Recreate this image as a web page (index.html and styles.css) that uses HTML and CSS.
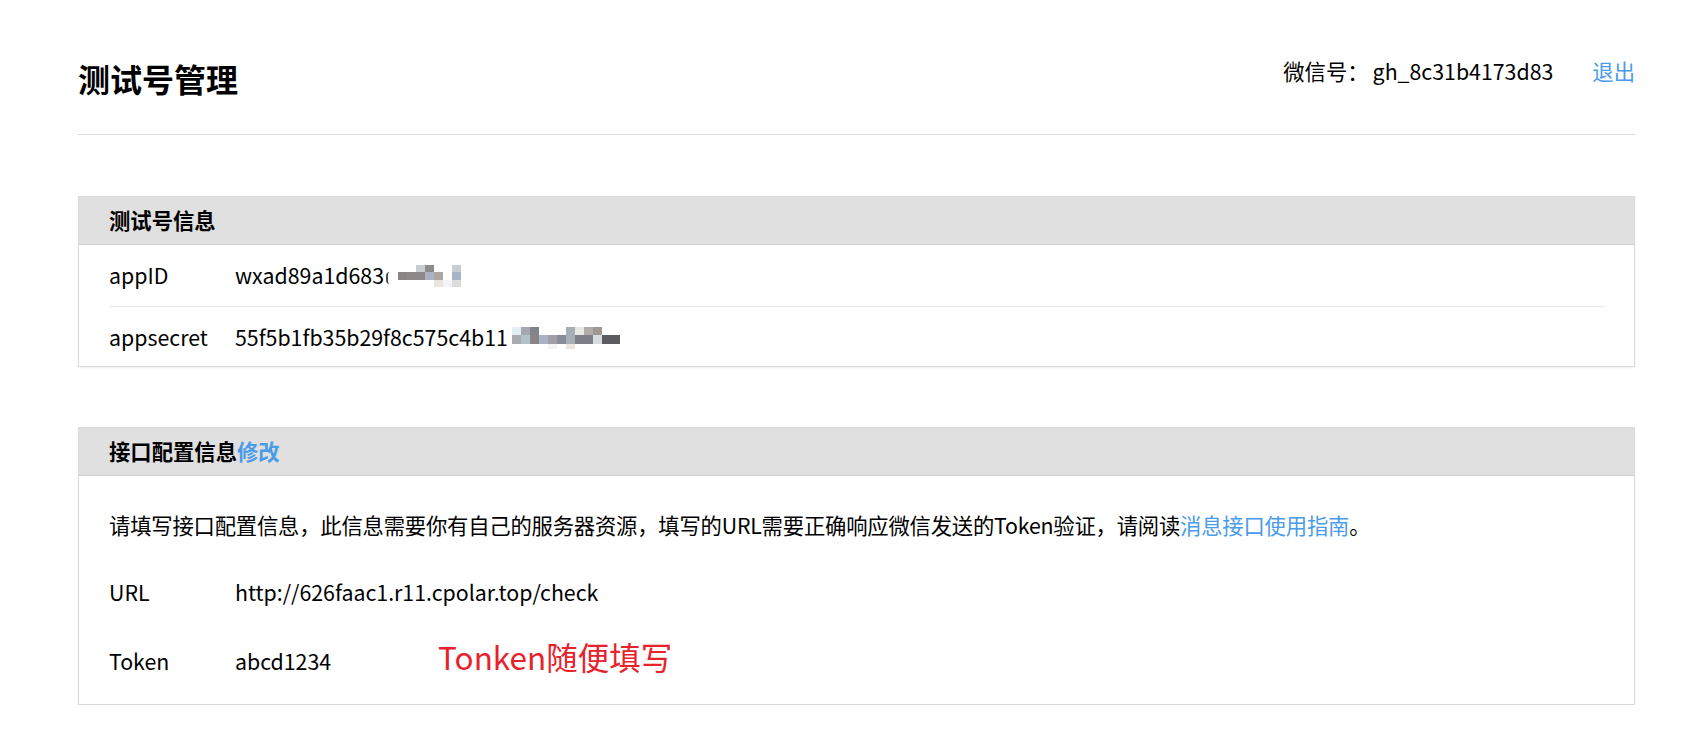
FILE: index.html
```html
<!DOCTYPE html>
<html lang="zh-CN">
<head>
<meta charset="utf-8">
<title>测试号管理</title>
<link rel="stylesheet" href="styles.css">
</head>
<body>
<div class="page">
  <header class="top">
    <h1 class="title">测试号管理</h1>
    <div class="account">
      <span class="acc-label">微信号：</span><span class="acc-id">gh_8c31b4173d83</span><a class="link logout" href="#">退出</a>
    </div>
  </header>

  <section class="card card-first">
    <div class="card-hd">测试号信息</div>
    <div class="rows">
      <div class="row row-a">
        <span class="label">appID</span>
        <span class="value">wxad89a1d683<span class="cut"></span><span class="mosaic mosaic-id">
          <i></i><i></i><i class="m-lb"></i><i class="m-g8"></i><i></i><i></i><i class="m-lb"></i>
          <i class="m-bw"></i><i class="m-bw2"></i><i class="m-bw3"></i><i class="m-bl"></i><i class="m-tn"></i><i></i><i class="m-bl2"></i>
          <i></i><i></i><i></i><i></i><i class="m-vl"></i><i class="m-vl2"></i><i class="m-vl3"></i>
        </span></span>
      </div>
      <div class="row row-b">
        <span class="label">appsecret</span>
        <span class="value">55f5b1fb35b29f8c575c4b11<span class="mosaic mosaic-sec">
          <i class="m-wb"></i><i class="m-ga"></i><i class="m-g7"></i><i></i><i></i><i></i><i class="m-bs"></i><i class="m-wg"></i><i class="m-tn2"></i><i class="m-br"></i><i></i><i></i>
          <i class="m-gs"></i><i class="m-bc"></i><i class="m-bw"></i><i class="m-bl"></i><i class="m-ga2"></i><i class="m-gb"></i><i class="m-bs"></i><i class="m-g6"></i><i class="m-g6"></i><i class="m-pl"></i><i class="m-dk"></i><i class="m-dk"></i>
          <i></i><i></i><i></i><i></i><i class="m-vl2"></i><i></i><i class="m-vl"></i><i></i><i></i><i></i><i></i><i></i>
        </span></span>
      </div>
    </div>
  </section>

  <section class="card card-second">
    <div class="card-hd">接口配置信息<a class="link" href="#">修改</a></div>
    <div class="body">
      <p class="desc">请填写接口配置信息，此信息需要你有自己的服务器资源，填写的URL需要正确响应微信发送的Token验证，请阅读<a class="link plain" href="#">消息接口使用指南</a>。</p>
      <div class="frow">
        <span class="label">URL</span>
        <span class="value">http://626faac1.r11.cpolar.top/check</span>
      </div>
      <div class="frow frow-token">
        <span class="label">Token</span>
        <span class="value value-token">abcd1234</span>
        <span class="note">Tonken随便填写</span>
      </div>
    </div>
  </section>
</div>
</body>
</html>
```
FILE: styles.css
```css
html, body {
  margin: 0;
  padding: 0;
  background: #ffffff;
}

body {
  font-family: "Noto Sans CJK SC", "Noto Sans", sans-serif;
  font-size: 21.33px;
  line-height: 32px;
  color: #000000;
}

.page {
  padding: 0 62px 0 78px;
}

.top {
  display: flex;
  justify-content: space-between;
  align-items: flex-start;
  padding-top: 54px;
  padding-bottom: 32px;
  border-bottom: 1px solid #d9d9d9;
}

.title {
  margin: 0;
  font-size: 32px;
  line-height: 48px;
  font-weight: bold;
}

.account {
  display: flex;
  padding-top: 1px;
  color: #000;
}

.acc-label {
  margin-right: 4px;
}

.link {
  color: #4a9be8;
  text-decoration: none;
}

.logout {
  margin-left: 39px;
}

.card {
  border: 1px solid #dadada;
  box-shadow: 0 1px 2px rgba(0, 0, 0, 0.06);
  background: #fff;
}

.card-first {
  margin-top: 61px;
}

.card-second {
  margin-top: 60px;
}

.card-hd {
  background: #e0e0e0;
  padding: 7px 30px 8px;
  font-weight: bold;
  border-bottom: 1px solid #cfcfcf;
}

.rows {
  padding: 0 30px;
}

.row {
  display: flex;
  padding: 14px 0 15px;
}

.row + .row {
  border-top: 1px solid #e8e8e8;
  padding-bottom: 13px;
}

.label {
  width: 126px;
  flex: none;
}

.value {
  white-space: nowrap;
}

.cut {
  display: inline-block;
  width: 4px;
  height: 12px;
  margin: 13px 0 0 2px;
  vertical-align: top;
  border-left: 2px solid #4a4a4a;
  border-radius: 6px 0 0 6px;
  box-sizing: border-box;
}

.mosaic {
  display: inline-grid;
  vertical-align: top;
  margin-top: 6px;
}

.mosaic i {
  display: block;
}

.mosaic-id {
  margin-left: 8px;
  grid-template-columns: repeat(7, 9px);
  grid-template-rows: 7px 8px 7px;
}

.mosaic-sec {
  margin-left: 4px;
  grid-template-columns: repeat(12, 9px);
  grid-template-rows: 8px 9px 5px;
}

.m-lb { background: #c8ccd4; }
.m-g8 { background: #8c8c8c; }
.m-bw { background: #8a8484; }
.m-bw2 { background: #8c8886; }
.m-bw3 { background: #8e8888; }
.m-bl { background: #a8b4c4; }
.m-bl2 { background: #a8b4c8; }
.m-tn { background: #b0a6a0; }
.m-vl { background: #ece6e2; }
.m-vl2 { background: #f2f4f8; }
.m-vl3 { background: #dcdcdc; }
.m-wb { background: #e4eef6; }
.m-ga { background: #a6a6ae; }
.m-g7 { background: #80848a; }
.m-bs { background: #a6aeb6; }
.m-wg { background: #e8e8e2; }
.m-tn2 { background: #b2aca8; }
.m-br { background: #a09890; }
.m-gs { background: #a8acb0; }
.m-bc { background: #b2c2ca; }
.m-ga2 { background: #a0a0a4; }
.m-gb { background: #888c98; }
.m-g6 { background: #7e7e86; }
.m-pl { background: #d8dce0; }
.m-dk { background: #5c5c60; }

.body {
  padding: 33px 30px 27px;
}

.desc {
  margin: 0;
  letter-spacing: -0.2px;
}

.plain {
  font-weight: normal;
}

.frow {
  display: flex;
  align-items: baseline;
  margin-top: 35px;
}

.frow-token {
  margin-top: 32px;
}

.value-token {
  width: 203px;
  flex: none;
}

.note {
  color: #e8222b;
  font-size: 31.5px;
  line-height: 32px;
}
```
